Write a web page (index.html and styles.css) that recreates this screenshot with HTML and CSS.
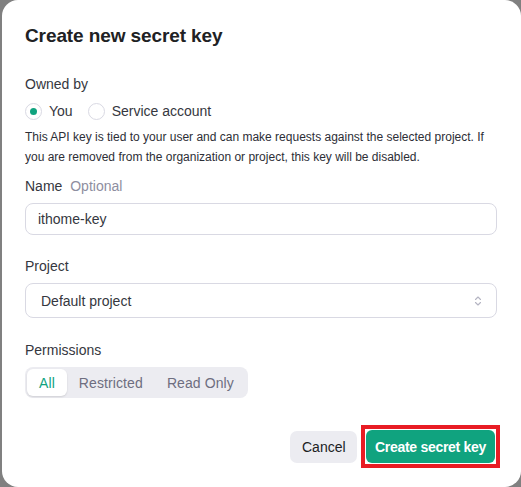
FILE: index.html
```html
<!DOCTYPE html>
<html>
<head>
<meta charset="utf-8">
<link rel="stylesheet" href="styles.css">
</head>
<body>
<div class="modal">
  <h1 class="title">Create new secret key</h1>

  <div class="section owned">
    <div class="label">Owned by</div>
    <div class="radios">
      <label class="radio"><span class="dot checked"></span><span class="radio-text">You</span></label>
      <label class="radio"><span class="dot"></span><span class="radio-text">Service account</span></label>
    </div>
    <p class="desc">This API key is tied to your user and can make requests against the selected project. If you are removed from the organization or project, this key will be disabled.</p>
  </div>

  <div class="section name">
    <div class="label">Name <span class="optional">Optional</span></div>
    <div class="input">ithome-key</div>
  </div>

  <div class="section project">
    <div class="label">Project</div>
    <div class="select">
      <span>Default project</span>
      <svg class="chev" width="8" height="12" viewBox="0 0 8 12" fill="none" stroke="#b4b4c2" stroke-width="1.1" stroke-linecap="round" stroke-linejoin="round"><path d="M1.5 4.5 L4 2 L6.5 4.5"/><path d="M1.5 7.5 L4 10 L6.5 7.5"/></svg>
    </div>
  </div>

  <div class="section perms">
    <div class="label">Permissions</div>
    <div class="segmented">
      <span class="seg active">All</span>
      <span class="seg">Restricted</span>
      <span class="seg">Read Only</span>
    </div>
  </div>

  <div class="footer">
    <button class="btn cancel">Cancel</button>
    <span class="highlight"><button class="btn primary">Create secret key</button></span>
  </div>
</div>
</body>
</html>
```

FILE: styles.css
```css
* { box-sizing: border-box; }
html, body { margin: 0; padding: 0; }
body {
  background: #808080;
  width: 521px;
  height: 487px;
  overflow: hidden;
  padding-left: 2px;
  font-family: "Liberation Sans", Arial, sans-serif;
  color: #353740;
}
.modal {
  width: 519px;
  height: 487px;
  background: #fff;
  border-radius: 16px;
  padding: 24px 24px 0 23px;
}
.title {
  margin: 0;
  font-size: 19px;
  letter-spacing: -0.1px;
  line-height: 24px;
  font-weight: 700;
  color: #202123;
}
.section { display: flex; flex-direction: column; }
.label {
  font-size: 14px;
  line-height: 20px;
  color: #353740;
}
.owned { margin-top: 26px; }
.radios { display: flex; gap: 15px; margin-top: 7px; }
.radio { display: flex; align-items: center; gap: 7px; font-size: 14px; line-height: 20px; }
.dot {
  width: 17px; height: 17px;
  border-radius: 50%;
  border: 1px solid #d9d9e3;
  display: flex; align-items: center; justify-content: center;
}
.dot.checked::after {
  content: "";
  width: 7px; height: 7px;
  border-radius: 50%;
  background: #10a37f;
}
.radio-text { letter-spacing: 0; }
.desc {
  margin: 6px 0 0;
  font-size: 12px;
  line-height: 20px;
  color: #2d2e36;
}
.name { margin-top: 9px; }
.optional { color: #8e8ea0; margin-left: 4px; }
.input {
  margin-top: 7px;
  height: 32px;
  border: 1px solid #d9d9e3;
  border-radius: 8px;
  padding: 0 12px;
  display: flex; align-items: center;
  font-size: 14px;
  color: #353740;
}
.project { margin-top: 21px; }
.select {
  margin-top: 7px;
  height: 35px;
  border: 1px solid #d9d9e3;
  border-radius: 8px;
  padding: 0 14px 0 15px;
  display: flex; align-items: center; justify-content: space-between;
  font-size: 14px;
  color: #353740;
}
.perms { margin-top: 22px; }
.segmented {
  margin-top: 7px;
  align-self: flex-start;
  display: flex;
  background: #ececf1;
  border-radius: 8px;
  padding: 2px;
  height: 31px;
}
.seg {
  display: flex; align-items: center;
  padding: 0 12px;
  font-size: 14px;
  color: #6e6e80;
  border-radius: 6px;
  letter-spacing: 0.1px;
}
.seg.active {
  background: #fff;
  color: #10a37f;
  box-shadow: 0 1px 2px rgba(0,0,0,0.12);
}
.footer {
  margin-top: 27px;
  display: flex;
  justify-content: flex-end;
  align-items: center;
  gap: 4px;
  margin-right: -3px;
}
.btn {
  font-family: inherit;
  font-size: 14px;
  border: none;
  border-radius: 7px;
  height: 32px;
  padding: 0 12px;
  cursor: pointer;
}
.cancel { background: #ececf1; color: #202123; width: 67px; }
.highlight {
  display: flex;
  border: 4px solid #e81c24;
  padding: 1px;
  background: #fff;
}
.primary {
  background: #10a37f;
  color: #fff;
  font-weight: 700;
  height: 33px;
  width: 129px;
  padding: 0;
  letter-spacing: -0.3px;
  border-radius: 6px;
}
```
